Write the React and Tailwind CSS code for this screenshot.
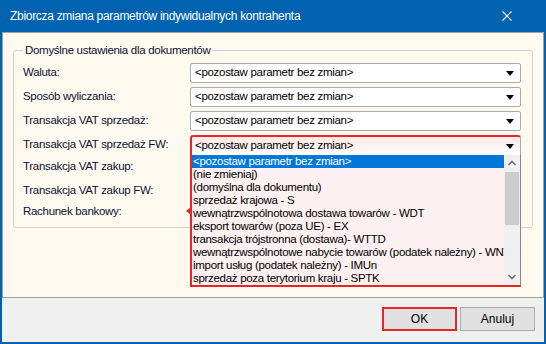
import React from "react";

const F = { fontFamily: '"Liberation Sans", Arial, sans-serif' };

function Arrow() {
  return (
    <svg width="8" height="5" viewBox="0 0 8 5" className="shrink-0">
      <polygon points="0,0 8,0 4,5" fill="#000" />
    </svg>
  );
}

function Combo({ value }) {
  return (
    <div className="flex h-[20px] w-[331px] items-center justify-between rounded-[2px] border border-[#a9a9a9] bg-white pl-[4px] pr-[6px] text-black">
      <span>{value}</span>
      <Arrow />
    </div>
  );
}

const items = [
  "<pozostaw parametr bez zmian>",
  "(nie zmieniaj)",
  "(domyślna dla dokumentu)",
  "sprzedaż krajowa - S",
  "wewnątrzwspólnotowa dostawa towarów - WDT",
  "eksport towarów (poza UE) - EX",
  "transakcja trójstronna (dostawa)- WTTD",
  "wewnątrzwspólnotowe nabycie towarów (podatek należny) - WNT",
  "import usług (podatek należny) - IMUn",
  "sprzedaż poza terytorium kraju - SPTK",
];

export default function App() {
  const v = "<pozostaw parametr bez zmian>";
  return (
    <div style={F} className="flex h-[344px] w-[546px] flex-col bg-[#0063b1] px-[2px] pb-[2px]">
      <div className="flex h-[32px] shrink-0 items-center justify-between pl-[8px] pr-[32px] text-[12px] tracking-[-0.3px] text-white">
        <span>Zbiorcza zmiana parametrów indywidualnych kontrahenta</span>
        <svg width="10" height="10" viewBox="0 0 10 10">
          <path d="M0.5 0.5 L9.5 9.5 M9.5 0.5 L0.5 9.5" stroke="#fff" strokeWidth="1.1" />
        </svg>
      </div>
      <div className="h-[266px] shrink-0 border border-[#a0a0a0] bg-[#fffaf0] px-[10px] pt-[10px]">
        <fieldset className="h-[185px] w-[520px] rounded-[3px] border border-[#d0d0d0] pl-[9px] pr-[11px] pt-[6px] pb-[5px] text-[11.5px] tracking-[-0.3px] text-[#0c1230]">
          <legend className="px-[2px] leading-[14px]">Domyślne ustawienia dla dokumentów</legend>
          <div className="flex flex-col">
            <div className="flex h-[20px] items-center justify-between">
              <span>Waluta:</span>
              <Combo value={v} />
            </div>
            <div className="mt-[4px] flex h-[20px] items-center justify-between">
              <span>Sposób wyliczania:</span>
              <Combo value={v} />
            </div>
            <div className="mt-[4px] flex h-[20px] items-center justify-between">
              <span>Transakcja VAT sprzedaż:</span>
              <Combo value={v} />
            </div>
            <div className="mt-[4px] flex h-[20px] items-center justify-between">
              <span>Transakcja VAT sprzedaż FW:</span>
              <div className="relative">
                <div className="flex h-[20px] w-[331px] items-center justify-between rounded-t-[3px] border-2 border-r border-b-0 border-[#e8262a] border-r-[#a9a9a9] bg-gradient-to-b from-[#fde8e8] to-white pl-[3px] pr-[6px] text-black">
                  <span>{v}</span>
                  <Arrow />
                </div>
                <div className="absolute left-0 top-[20px] z-10 flex h-[132px] w-[331px] border-b-2 border-l-2 border-r border-[#e8262a] border-r-[#828790] bg-[#fdf0f0] text-black">
                  <div className="flex w-[312px] flex-col overflow-hidden">
                    {items.map((it, i) => (
                      <div
                        key={i}
                        className={
                          "h-[13px] whitespace-nowrap pl-[1px] leading-[13px] " +
                          (i === 0 ? "bg-[#0078d7] text-white" : "")
                        }
                      >
                        {it}
                      </div>
                    ))}
                  </div>
                  <div className="flex w-[16px] flex-col items-center bg-[#f0f0f0]">
                    <svg width="16" height="17" viewBox="0 0 16 17">
                      <path d="M4.5 10 L8 6.5 L11.5 10" fill="none" stroke="#606060" strokeWidth="1.3" />
                    </svg>
                    <div className="h-[53px] w-[14px] bg-[#cdcdcd]" />
                    <div className="flex-1" />
                    <svg width="16" height="17" viewBox="0 0 16 17">
                      <path d="M4.5 7 L8 10.5 L11.5 7" fill="none" stroke="#606060" strokeWidth="1.3" />
                    </svg>
                  </div>
                  <svg width="5" height="8" viewBox="0 0 5 8" className="absolute left-[-6px] top-[52px]">
                    <polygon points="5,0 5,8 0,4" fill="#e8262a" />
                  </svg>
                </div>
              </div>
            </div>
            <div className="mt-[2px] flex h-[20px] items-center">
              <span>Transakcja VAT zakup:</span>
            </div>
            <div className="mt-[4px] flex h-[20px] items-center">
              <span>Transakcja VAT zakup FW:</span>
            </div>
            <div className="mt-[1px] flex h-[20px] items-center">
              <span>Rachunek bankowy:</span>
            </div>
          </div>
        </fieldset>
      </div>
      <div className="flex flex-1 items-start justify-end gap-[3px] bg-[#f0f0f0] pr-[9px] pt-[9px] text-[12px] text-black">
        <div className="flex h-[24px] w-[75px] items-center justify-center border-2 border-[#e8262a] bg-[#e1e1e1]">
          OK
        </div>
        <div className="flex h-[24px] w-[75px] items-center justify-center border border-[#adadad] bg-[#e1e1e1]">
          Anuluj
        </div>
      </div>
    </div>
  );
}
